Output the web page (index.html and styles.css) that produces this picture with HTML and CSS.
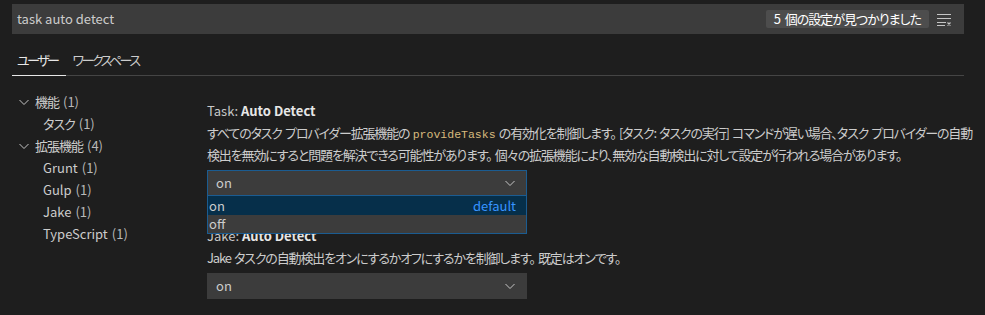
FILE: index.html
```html
<!DOCTYPE html>
<html lang="ja">
<head>
    <meta charset="UTF-8">
    <title>設定</title>
    <link rel="stylesheet" href="styles.css">
</head>
<body>
    <div class="header">
        <div class="search">
            <span class="search-text">task auto detect</span>
            <span class="count">5 個の設定が見つかりました</span>
            <svg class="clear" width="16" height="16" viewBox="0 0 16 16">
                <path d="M1 3.5h14M1 7.5h14M1 11.5h9M1 14.5h8" stroke="#c5c5c5" stroke-width="1" fill="none"/>
                <path d="M11.5 11.5l3 3M14.5 11.5l-3 3" stroke="#c5c5c5" stroke-width="1.2" fill="none"/>
            </svg>
        </div>
        <div class="tabs">
            <span class="tab active">ユーザー</span>
            <span class="tab">ワークスペース</span>
        </div>
    </div>

    <div class="body">
        <ul class="tree">
            <li class="group"><svg class="twistie" width="12" height="12" viewBox="0 0 12 12"><path d="M1.5 4l4.5 4.5L10.5 4" stroke="#c5c5c5" fill="none"/></svg><span class="ja">機能</span> <span class="num">(1)</span></li>
            <li class="leaf"><span class="ja">タスク</span> <span class="num">(1)</span></li>
            <li class="group"><svg class="twistie" width="12" height="12" viewBox="0 0 12 12"><path d="M1.5 4l4.5 4.5L10.5 4" stroke="#c5c5c5" fill="none"/></svg><span class="ja">拡張機能</span> <span class="num">(4)</span></li>
            <li class="leaf">Grunt <span class="num">(1)</span></li>
            <li class="leaf">Gulp <span class="num">(1)</span></li>
            <li class="leaf">Jake <span class="num">(1)</span></li>
            <li class="leaf">TypeScript <span class="num">(1)</span></li>
        </ul>

        <div class="settings">
            <div class="setting">
                <div class="title">Task: <b>Auto Detect</b></div>
                <div class="desc">すべてのタスク プロバイダー拡張機能の <code>provideTasks</code> の有効化を制御します。 [タスク: タスクの実行] コマンドが遅い場合、タスク プロバイダーの自動<br>検出を無効にすると問題を解決できる可能性があります。 個々の拡張機能により、無効な自動検出に対して設定が行われる場合があります。</div>
                <div class="select open">
                    <span>on</span>
                    <svg class="chevron" width="16" height="16" viewBox="0 0 16 16"><path d="M3.5 6l4.5 4.5L12.5 6" stroke="#c5c5c5" fill="none"/></svg>
                    <ul class="options">
                        <li class="selected">on <span class="default">default</span></li>
                        <li>off</li>
                    </ul>
                </div>
            </div>

            <div class="setting">
                <div class="title">Jake: <b>Auto Detect</b></div>
                <div class="desc">Jake タスクの自動検出をオンにするかオフにするかを制御します。 既定はオンです。</div>
                <div class="select">
                    <span>on</span>
                    <svg class="chevron" width="16" height="16" viewBox="0 0 16 16"><path d="M3.5 6l4.5 4.5L12.5 6" stroke="#c5c5c5" fill="none"/></svg>
                </div>
            </div>
        </div>
    </div>
</body>
</html>
```

FILE: styles.css
```css
body {
    margin: 0;
    background-color: #1e1e1e;
    color: #cccccc;
    font-family: "Noto Sans CJK JP", "Noto Sans", sans-serif;
    font-feature-settings: "palt";
    font-size: 13px;
    line-height: 20px;
    overflow: hidden;
}

.header {
    padding: 4px 21px 0 12px;
}

.search {
    height: 30px;
    background-color: #3c3c3c;
    display: flex;
    align-items: center;
    padding: 0 12px 0 5px;
}

.search-text {
    flex: 1;
    color: #cccccc;
}

.count {
    background-color: #4d4d4d;
    color: #ffffff;
    border-radius: 2px;
    height: 18px;
    line-height: 18px;
    padding: 0 8px;
    margin-right: 7px;
    letter-spacing: -1px;
    word-spacing: 3px;
}

.clear {
    display: block;
}

.tabs {
    margin-top: 8px;
    border-bottom: 1px solid #454545;
    display: flex;
}

.tab {
    padding: 8px 5px 5px;
    margin-right: 2px;
    color: #cccccc;
    letter-spacing: -2.5px;
}

.tab.active {
    color: #e7e7e7;
    padding-right: 8px;
    border-bottom: 1px solid #e7e7e7;
    margin-bottom: -1px;
}

.body {
    display: flex;
}

.tree {
    list-style: none;
    margin: 0;
    padding: 15px 0 0 0;
    width: 207px;
    flex: none;
}

.tree li {
    height: 22px;
    line-height: 22px;
    display: flex;
    align-items: center;
    white-space: nowrap;
}

.tree .ja {
    letter-spacing: -1px;
}

.tree .group {
    padding-left: 18px;
}

.tree .leaf {
    padding-left: 43px;
}

.twistie {
    margin-right: 5px;
}

.num {
    margin-left: 4px;
    color: #b8b8b8;
}

.settings {
    padding-top: 25px;
    flex: 1;
}

.setting {
    margin-bottom: 30px;
}

.title {
    color: #c8c8c8;
    margin-bottom: 2px;
}

.title b {
    color: #e7e7e7;
}

.desc {
    color: #cccccc;
    white-space: nowrap;
    letter-spacing: -1.15px;
    word-spacing: 1.5px;
}

code {
    font-family: "Liberation Mono", monospace;
    font-size: 11.5px;
    letter-spacing: 0;
    word-spacing: 0;
    color: #d7ba7d;
}

.select {
    position: relative;
    margin-top: 5px;
    width: 318px;
    height: 24px;
    background-color: #3c3c3c;
    border: 1px solid #3c3c3c;
    display: flex;
    align-items: center;
    padding: 0;
}

.select span {
    flex: 1;
    padding-left: 8px;
}

.chevron {
    margin-right: 8px;
}

.select.open {
    border-color: #1b5c91;
}

.options {
    position: absolute;
    top: 100%;
    left: -1px;
    width: 318px;
    margin: 0;
    padding: 0;
    list-style: none;
    background-color: #3c3c3c;
    border: 1px solid #1b5c91;
    z-index: 2;
}

.options li {
    height: 18px;
    line-height: 18px;
    padding: 0 10px 0 1px;
    display: flex;
    justify-content: space-between;
}

.options li.selected {
    background-color: #062f4a;
    height: 19px;
    line-height: 19px;
}

.options .default {
    flex: none;
    padding: 0;
    color: #3794ff;
}
```
